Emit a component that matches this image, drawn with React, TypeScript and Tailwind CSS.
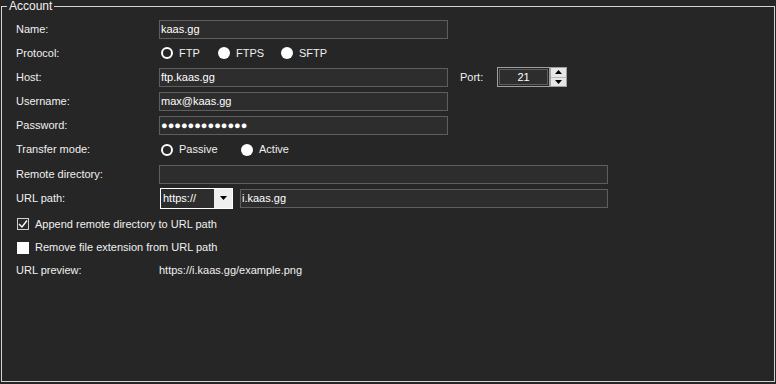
import type { ReactNode } from 'react';

function Row({ label, h = 'h-[24px]', children }: { label: string; h?: string; children?: ReactNode }) {
  return (
    <div className={`flex items-center ${h}`}>
      <div className="w-[143px] shrink-0">{label}</div>
      <div className="flex items-center">{children}</div>
    </div>
  );
}

function TextBox({ value, w }: { value: string; w: string }) {
  return (
    <div className={`h-[19px] ${w} border border-[#5e5e5e] bg-[#2d2d2d] flex items-center pl-[1px] text-white`}>
      {value}
    </div>
  );
}

function Radio({ label, checked, gap }: { label: string; checked?: boolean; gap: string }) {
  return (
    <div className={`flex items-center ${gap}`}>
      {checked ? (
        <span className="w-[12px] h-[12px] rounded-full border-[2px] border-white bg-[#262626]" />
      ) : (
        <span className="w-[12px] h-[12px] rounded-full bg-white" />
      )}
      <span className="ml-[6px]">{label}</span>
    </div>
  );
}

function CheckRow({ label, checked, h }: { label: string; checked?: boolean; h: string }) {
  return (
    <div className={`flex items-center pl-[1px] ${h}`}>
      {checked ? (
        <span className="w-[12px] h-[12px] border border-[#d0d0d0] bg-[#2a2a2a] flex items-center justify-center">
          <svg width="10" height="10" viewBox="0 0 10 10">
            <path d="M1 5 L4 8 L9 1.5" fill="none" stroke="#ffffff" strokeWidth="1.4" />
          </svg>
        </span>
      ) : (
        <span className="w-[12px] h-[12px] bg-white" />
      )}
      <span className="ml-[6px]">{label}</span>
    </div>
  );
}

export default function App() {
  return (
    <div
      className="w-[776px] h-[384px] bg-[#262626] text-[#f0f0f0] text-[11px] leading-none relative overflow-hidden"
      style={{ fontFamily: '"Liberation Sans", Arial, sans-serif' }}
    >
      <div className="absolute left-[1px] top-[6px] w-[774px] h-[376px] border border-[#d4d4d4]">
        <div className="absolute -top-[7px] left-[5px] bg-[#262626] px-[2px] text-[#f0f0f0] text-[12px] leading-[13px]">
          Account
        </div>
        <div className="flex flex-col pl-[14px] pt-[10px]">
          <Row label="Name:">
            <TextBox value="kaas.gg" w="w-[289px]" />
          </Row>
          <Row label="Protocol:">
            <div className="flex items-center pl-[2px]">
              <Radio label="FTP" checked gap="w-[57px]" />
              <Radio label="FTPS" gap="w-[63px]" />
              <Radio label="SFTP" gap="" />
            </div>
          </Row>
          <Row label="Host:">
            <TextBox value="ftp.kaas.gg" w="w-[289px]" />
            <span className="ml-[12px] w-[37px]">Port:</span>
            <div className="flex h-[20px]">
              <div className="w-[53px] h-[20px] border border-[#a0a0a0] p-[1px]">
                <div className="w-full h-full border border-[#5e5e5e] bg-[#2d2d2d] flex items-center justify-center text-white">
                  21
                </div>
              </div>
              <div className="w-[17px] h-[20px] flex flex-col bg-[#e6e6e6] border border-[#a0a0a0]">
                <div className="flex-1 flex items-center justify-center border-b border-[#b8b8b8]">
                  <svg width="7" height="4" viewBox="0 0 7 4"><path d="M0 4 L3.5 0 L7 4 Z" fill="#000" /></svg>
                </div>
                <div className="flex-1 flex items-center justify-center">
                  <svg width="7" height="4" viewBox="0 0 7 4"><path d="M0 0 L7 0 L3.5 4 Z" fill="#000" /></svg>
                </div>
              </div>
            </div>
          </Row>
          <Row label="Username:">
            <TextBox value="max@kaas.gg" w="w-[289px]" />
          </Row>
          <Row label="Password:">
            <TextBox value="●●●●●●●●●●●●●" w="w-[289px]" />
          </Row>
          <Row label="Transfer mode:" h="h-[25px]">
            <div className="flex items-center pl-[2px]">
              <Radio label="Passive" checked gap="w-[80px]" />
              <Radio label="Active" gap="" />
            </div>
          </Row>
          <Row label="Remote directory:">
            <TextBox value="" w="w-[449px]" />
          </Row>
          <Row label="URL path:">
            <div className="ml-[1px] w-[73px] h-[21px] border border-white bg-[#2d2d2d] flex">
              <div className="flex-1 flex items-center pl-[2px] text-white">https://</div>
              <div className="w-[18px] h-full bg-[#efefef] flex items-center justify-center">
                <svg width="7" height="4" viewBox="0 0 7 4"><path d="M0 0 L7 0 L3.5 4 Z" fill="#000" /></svg>
              </div>
            </div>
            <div className="ml-[7px]">
              <TextBox value="i.kaas.gg" w="w-[368px]" />
            </div>
          </Row>
          <div className="h-[2px]" />
          <CheckRow label="Append remote directory to URL path" checked h="h-[24px]" />
          <CheckRow label="Remove file extension from URL path" h="h-[23px]" />
          <Row label="URL preview:" h="h-[23px]">
            <span>https://i.kaas.gg/example.png</span>
          </Row>
        </div>
      </div>
    </div>
  );
}
